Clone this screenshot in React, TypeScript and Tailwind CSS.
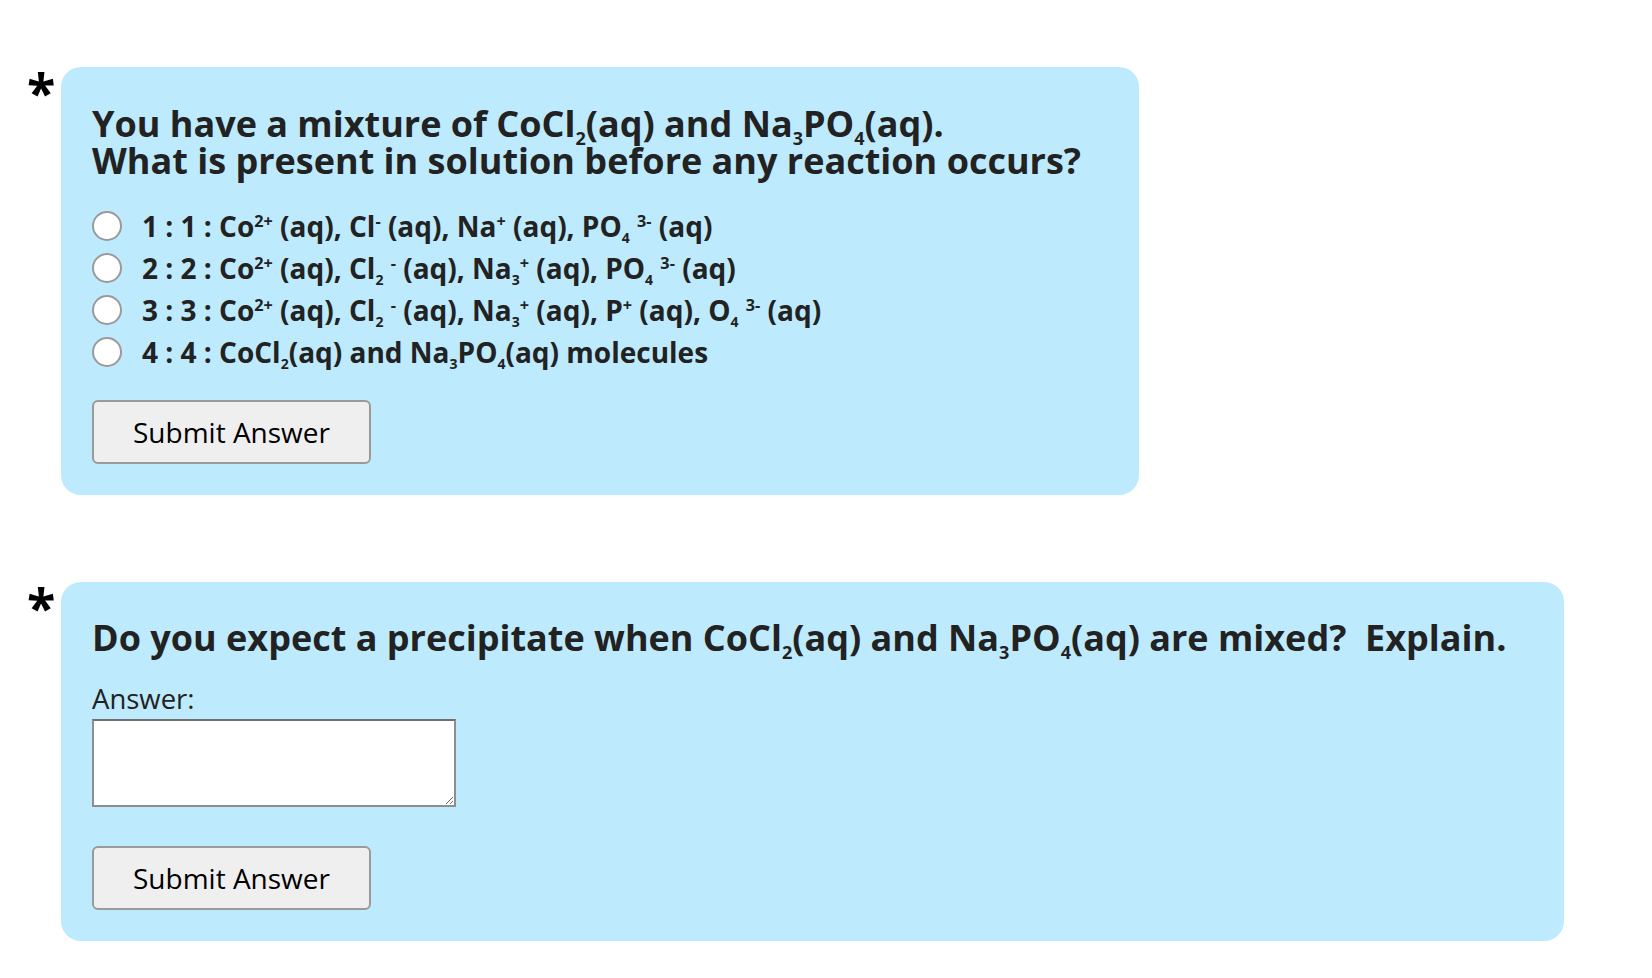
import type { ReactNode } from 'react';

function Sub({ children }: { children: ReactNode }) {
  return <sub className="text-[0.5em] leading-none -bottom-[0.45em]">{children}</sub>;
}

function Sup({ children }: { children: ReactNode }) {
  return <sup className="text-[0.58em] leading-none -top-[0.6em]">{children}</sup>;
}

function Star() {
  return (
    <span className="w-[34px] shrink-0 text-[52px] font-bold leading-[50px] text-black">
      *
    </span>
  );
}

function SubmitButton() {
  return (
    <button className="h-[64px] w-[279px] rounded-[6px] border-2 border-[#9a9a9a] bg-[#efefef] text-[28px] text-black">
      Submit Answer
    </button>
  );
}

const options: ReactNode[] = [
  <>
    1 : 1 : Co<Sup>2+</Sup> (aq), Cl<Sup>-</Sup> (aq), Na<Sup>+</Sup> (aq), PO<Sub>4</Sub> <Sup>3-</Sup> (aq)
  </>,
  <>
    2 : 2 : Co<Sup>2+</Sup> (aq), Cl<Sub>2</Sub> <Sup>-</Sup> (aq), Na<Sub>3</Sub>
    <Sup>+</Sup> (aq), PO<Sub>4</Sub> <Sup>3-</Sup> (aq)
  </>,
  <>
    3 : 3 : Co<Sup>2+</Sup> (aq), Cl<Sub>2</Sub> <Sup>-</Sup> (aq), Na<Sub>3</Sub>
    <Sup>+</Sup> (aq), P<Sup>+</Sup> (aq), O<Sub>4</Sub> <Sup>3-</Sup> (aq)
  </>,
  <>
    4 : 4 : CoCl<Sub>2</Sub>(aq) and Na<Sub>3</Sub>PO<Sub>4</Sub>(aq) molecules
  </>,
];

export default function App() {
  return (
    <div className="min-h-screen bg-white pl-[27px] pt-[67px] font-['Open_Sans',sans-serif] text-[#222]">
      {/* Question 1 */}
      <div className="flex items-start">
        <Star />
        <div className="w-[1078px] rounded-[20px] bg-[#bdeafd] pb-[31px] pl-[31px] pr-[30px] pt-[38px]">
          <h2 className="text-[36px] font-bold leading-[37px]">
            You have a mixture of CoCl<Sub>2</Sub>(aq) and Na<Sub>3</Sub>PO<Sub>4</Sub>(aq).
            <br />
            What is present in solution before any reaction occurs?
          </h2>
          <div className="mt-[26px] flex flex-col">
            {options.map((opt, i) => (
              <label key={i} className="flex h-[42px] items-center gap-[20px]">
                <span className="h-[30px] w-[30px] shrink-0 rounded-full border-2 border-[#9a9a9a] bg-white" />
                <span className="whitespace-nowrap text-[28px] font-bold leading-[42px]">{opt}</span>
              </label>
            ))}
          </div>
          <div className="mt-[27px]">
            <SubmitButton />
          </div>
        </div>
      </div>

      {/* Question 2 */}
      <div className="mt-[87px] flex items-start">
        <Star />
        <div className="w-[1503px] rounded-[20px] bg-[#bdeafd] pb-[31px] pl-[31px] pr-[30px] pt-[35px]">
          <h2 className="whitespace-pre text-[36px] font-bold leading-[42px]">
            Do you expect a precipitate when CoCl<Sub>2</Sub>(aq) and Na<Sub>3</Sub>PO<Sub>4</Sub>(aq) are mixed?{'  '}Explain.
          </h2>
          <div className="mt-[22px] text-[27.5px] leading-[36px]">Answer:</div>
          <textarea className="mt-[2px] block h-[88px] w-[364px] border-2 border-[#8e8e8e] border-t-[#6f6f6f] bg-white" />
          <div className="mt-[39px]">
            <SubmitButton />
          </div>
        </div>
      </div>
    </div>
  );
}
